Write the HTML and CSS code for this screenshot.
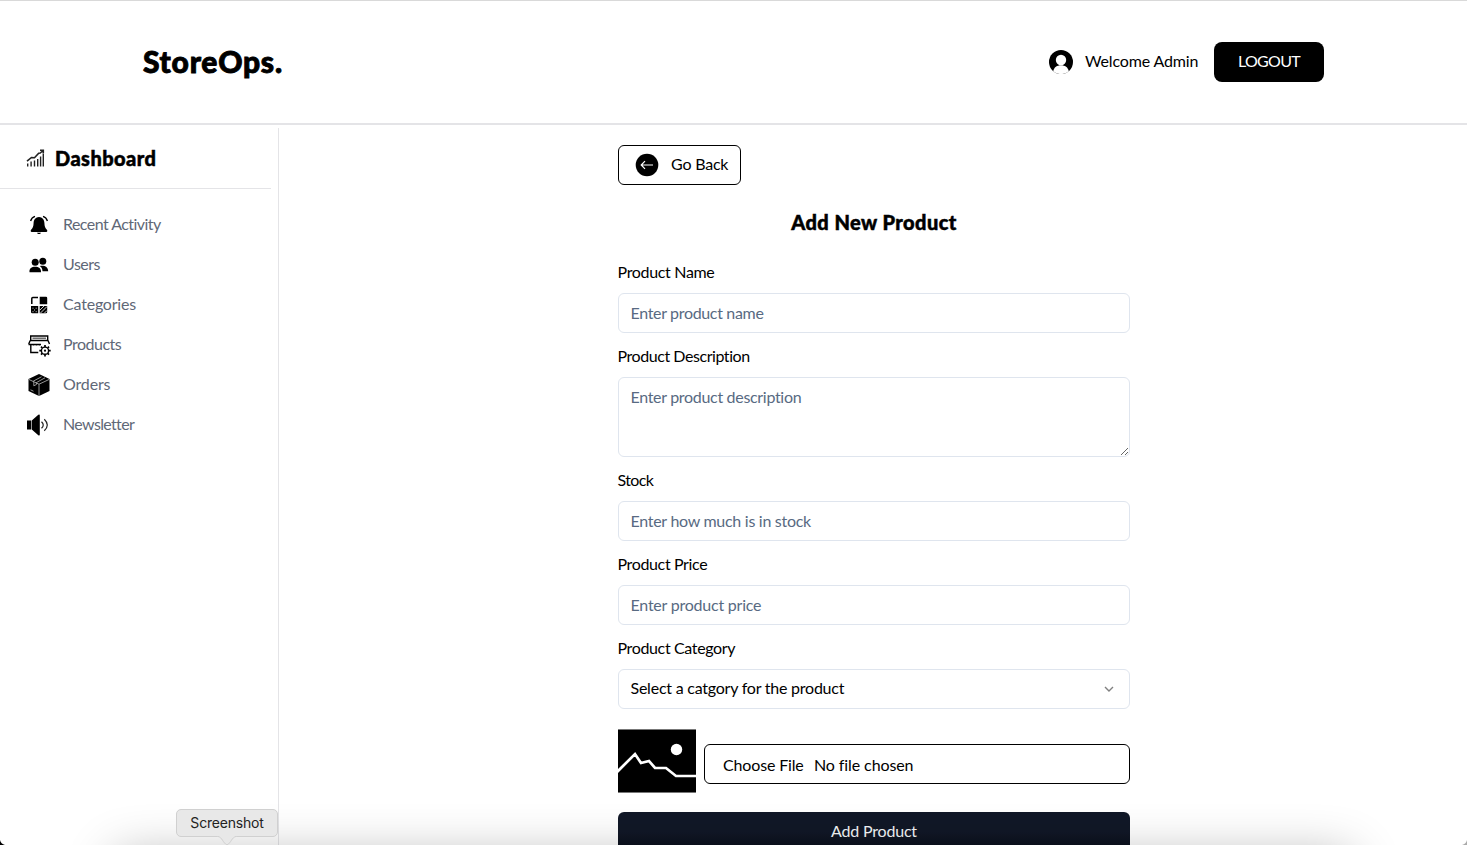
FILE: index.html
```html
<!DOCTYPE html>
<html lang="en">
<head>
<meta charset="utf-8">
<title>StoreOps</title>
<link rel="stylesheet" href="styles.css">
</head>
<body>
<div class="page">
<header class="topbar">
  <div class="brand">StoreOps.</div>
  <div class="account">
    <svg class="avatar" viewBox="0 0 24 24"><circle cx="12" cy="12" r="12"/><circle cx="12" cy="10" r="5.2" fill="#fff"/><path d="M4.200 21.200C5 17.200 8 15.200 12 15.200s7 2 7.800 6A12 12 0 0 1 4.200 21.200z" fill="#fff"/></svg>
    <span class="welcome">Welcome Admin</span>
    <button class="logout">LOGOUT</button>
  </div>
</header>
<div class="shell">
  <aside class="sidebar">
    <div class="side-head">
      <svg class="chart" viewBox="0 0 20 20" fill="none" stroke="#222"><path d="M1.700 18.500v-3M5.100 18.500v-5M8.500 18.500v-6M11.700 18.500v-7.500M14.600 18.500v-10M17.300 18.500v-13" stroke-width="1.400"/><path d="M1 13.200 5.500 9.500l3 .2 4.200-4.500 1.500-.2 3-2.500M14 2.300h3.300v3" stroke-width="1.600"/></svg>
      <span class="dash">Dashboard</span>
    </div>
    <nav class="menu">
      <a class="item"><svg viewBox="0 0 24 24"><path d="M12 4c-3.500.3-5.300 2.700-5.400 6-.1 3.500-.8 5-2.500 6.700-.8.900-.4 2.300.6 2.300h14.600c1 0 1.400-1.400.6-2.300-1.700-1.700-2.400-3.200-2.500-6.700C17.300 6.700 15.500 4.300 12 4zM10 19.700h4c-.4 1.700-3.600 1.700-4 0z"/><path d="M8 3.300C5.500 4 4.300 5.500 3.600 8M16 3.300c2.500.7 3.700 2.200 4.400 4.700" fill="none" stroke="#000" stroke-width="1.300"/></svg><span class="t-recent">Recent Activity</span></a>
      <a class="item"><svg viewBox="0 0 24 24"><circle cx="8.200" cy="9.200" r="3.500"/><circle cx="15.800" cy="8.200" r="3.500"/><path d="M2.500 19.300c-.4-4 2.200-5.500 5.700-5.500s6.100 1.500 5.800 5.500zM12.800 13.100c4.500-1 8.300.7 8.400 5.200h-5.700c-.1-2.500-1-4-2.700-5.200z"/></svg><span class="t-users">Users</span></a>
      <a class="item"><svg viewBox="0 0 24 24"><path d="M4.800 11V5.500q0-1 1-1H11" fill="none" stroke="#000" stroke-width="1.500"/><path d="M12.700 3.800H19q1.200 0 1.200 1.200v6.200h-7.500zM4 13h7.200v7.200H5.200Q4 20.200 4 19zM12.700 13h7.500v6q0 1.200-1.200 1.200h-6.300z"/><path d="m13 17 4-4M13.500 20l6.500-6.500M17.500 20l2.500-2.500" stroke="#fff" stroke-width=".8"/><path d="M5.500 15.200h1M8.700 15.200h1M7 17h1M5.500 18.700h1M8.700 18.700h1" stroke="#ddd" stroke-width=".9"/></svg><span class="t-cat">Categories</span></a>
      <a class="item"><svg viewBox="0 0 24 24" fill="none" stroke="#000" stroke-width="1.400"><path d="M3.700 3h17v4.500h-17zM3.200 7.500 1.700 11M21 7.500l1.500 3.500M1.500 11.500H14M3.800 11.500v8h7.500M6.500 11.500v1M9.500 11.500v1M12.500 11.500v1"/><path d="M5.500 5.200h13.500" stroke-width="1.300" stroke="#555"/><circle cx="18" cy="17.700" r="3.600"/><path d="M18 12v2M18 21.400v2M12.300 17.700h2M21.700 17.700h2M14 13.700l1.300 1.300M20.700 20.400l1.300 1.300M14 21.700l1.300-1.300M20.700 15l1.300-1.300" stroke-width="1.700"/><circle cx="18" cy="17.700" r="1.100" fill="#000" stroke="none"/></svg><span class="t-prod">Products</span></a>
      <a class="item"><svg viewBox="0 0 24 24"><path d="m12 1 10.500 5v12L12 23 1.500 18V6z"/><path d="m2 6.500 10 4.700 10-4.700M12 11.200V23M6.800 8.500v4.300l2.600-1.300V9.600L18 4.800M6.200 8.200 14.500 3.800M3.500 16.800l3 1.400" fill="none" stroke="#bbb" stroke-width=".8"/></svg><span class="t-ord">Orders</span></a>
      <a class="item"><svg viewBox="0 0 24 24"><path d="M0 7.500h4.200v9H0zM4.800 7.500l6.500-5.800q1.500-.8 1.500.8v19q0 1.600-1.500.8l-6.500-5.800z"/><path d="M14.500 8.700q3.500 3.300 0 6.600M17.300 6.200q6 5.800 0 11.600" fill="none" stroke="#222" stroke-width="1.200"/></svg><span class="t-news">Newsletter</span></a>
    </nav>
  </aside>
  <main class="main">
    <form class="form">
      <button class="back" type="button"><svg viewBox="0 0 24 24"><circle cx="12" cy="12" r="11.300"/><path d="M18 12H6.200M10 8.200 6.200 12l3.800 3.800" fill="none" stroke="#fff" stroke-width="1.200"/></svg><span class="t-back">Go Back</span></button>
      <h1 class="title">Add New Product</h1>
      <label class="label l-name">Product Name</label>
      <input class="field p-name" placeholder="Enter product name">
      <label class="label l-desc">Product Description</label>
      <textarea class="field area p-desc" placeholder="Enter product description"></textarea>
      <label class="label l-stock">Stock</label>
      <input class="field p-stock" placeholder="Enter how much is in stock">
      <label class="label l-price">Product Price</label>
      <input class="field p-price" placeholder="Enter product price">
      <label class="label l-cat">Product Category</label>
      <div class="field select"><span class="t-select">Select a catgory for the product</span><svg viewBox="0 0 16 16" fill="none" stroke="#808080" stroke-width="1.400"><path d="m4 6 4 4 4-4"/></svg></div>
      <div class="upload">
        <svg class="thumb" viewBox="0 0 78 64"><path d="M0 0h78v64H0z"/><path d="M0 .5h78M0 63.500h78" stroke="#777"/><circle cx="58.500" cy="20.500" r="5.700" fill="#fff"/><path d="m-1 43 18-18 6 9 8-2 6 7h11l10 8h21" fill="none" stroke="#fff" stroke-width="2.700"/></svg>
        <div class="file"><span class="choose">Choose File</span><span class="none">No file chosen</span></div>
      </div>
      <button class="submit" type="button">Add Product</button>
    </form>
  </main>
</div>
<div class="dock-shadow"></div>
<div class="tooltip">Screenshot<svg viewBox="0 0 20 10"><path d="M0 0h20c-4 1-6 7-10 9C6 7 4 1 0 0z" fill="#e8e8e8"/><path d="M1 .5C5 1 6 7 10 9c4-2 5-8 9-8.500" fill="none" stroke="#d0d0d0"/></svg></div>
<svg class="corner left" viewBox="0 0 6 6"><path d="M0 0q1 5 6 6H0z"/></svg>
<svg class="corner right" viewBox="0 0 6 6"><path d="M6 0Q5 5 0 6h6z" fill="#aaa"/></svg>
</div>
</body>
</html>
```
FILE: styles.css
```css
* { box-sizing: border-box; }
body { margin: 0; background: #fff; color: #000; font: 16px/24px Lato, sans-serif; }
button, input, textarea { font: inherit; color: inherit; }
svg { display: block; flex: none; }
.page { height: 845px; overflow: hidden; position: relative; }
.topbar { height: 125px; border-top: 1px solid #d9d9d9; border-bottom: 2px solid #e4e4e7; padding: 0 143px; display: flex; align-items: center; justify-content: space-between; }
.brand { font-size: 30px; font-weight: 900; line-height: 36px; letter-spacing: .75px; padding-bottom: 3px; -webkit-text-stroke: .9px #000; }
.account { display: flex; align-items: center; }
.avatar { width: 24px; height: 24px; margin-right: 12px; }
.welcome { width: 129px; white-space: nowrap; letter-spacing: -.15px; padding-bottom: 2px; }
.logout { width: 110px; height: 40px; border: 0; border-radius: 8px; background: #000; color: #fff; padding: 0 0 2px; letter-spacing: -.7px; }
.shell { display: flex; height: 720px; padding-top: 3px; overflow: hidden; }
.sidebar { width: 279px; flex: none; border-right: 1px solid #e4e4e7; padding-right: 7px; }
.side-head { height: 61px; border-bottom: 1px solid #e4e4e7; padding: 0 0 0 26px; display: flex; align-items: center; gap: 9px; }
.chart { width: 20px; height: 20px; }
.dash { font-size: 20px; font-weight: 900; line-height: 28px; letter-spacing: .45px; padding-bottom: 1px; -webkit-text-stroke: .5px #000; }
.menu { padding: 16px 0 0 27px; }
.item { height: 40px; display: flex; align-items: center; gap: 12px; color: #5f6877; }
.item svg { width: 24px; height: 24px; }
.item span { padding-bottom: 2px; }
.t-recent { letter-spacing: -.55px; }
.t-users { letter-spacing: -.5px; }
.t-cat { letter-spacing: -.2px; }
.t-prod { letter-spacing: -.5px; }
.t-ord { letter-spacing: -.15px; }
.t-news { letter-spacing: -.65px; }
.main { flex: 1; padding: 17px 0 0 339px; }
.form { width: 512px; display: flex; flex-direction: column; }
.back { width: 123px; height: 40px; border: 1px solid #000; border-radius: 6px; background: #fff; padding: 0 0 0 16px; display: flex; align-items: center; gap: 12px; white-space: nowrap; flex: none; }
.back svg { width: 24px; height: 24px; }
.t-back { letter-spacing: -.2px; padding-bottom: 2px; }
.title { margin: 23px 0 24px; font-size: 20px; line-height: 28px; font-weight: 900; text-align: center; letter-spacing: .45px; -webkit-text-stroke: .5px #000; }
.label { height: 24px; margin: 0 0 9px -.5px; }
.field { width: 512px; height: 40px; margin-bottom: 11px; border: 1px solid #dfe5ee; border-radius: 6px; padding: 0 12px 2px 11.5px; background: #fff; flex: none; }
.field::placeholder { color: #586a82; opacity: 1; }
.l-name { letter-spacing: -.33px; }
.l-desc { letter-spacing: -.44px; }
.l-stock { letter-spacing: -.6px; }
.l-price { letter-spacing: -.36px; }
.l-cat { letter-spacing: -.36px; }
.p-name { letter-spacing: -.33px; }
.p-desc { letter-spacing: -.31px; }
.p-stock { letter-spacing: -.28px; }
.p-price { letter-spacing: -.22px; }
.t-select { letter-spacing: -.23px; }
.area { height: 80px; padding: 7px 12px 8px 11.5px; resize: vertical; display: block; }
.select { display: flex; justify-content: space-between; align-items: center; margin-bottom: 19px; padding-bottom: 0; }
.t-select { padding-bottom: 2px; }
.select svg { width: 16px; height: 16px; }
.upload { display: flex; align-items: center; gap: 8px; height: 66px; }
.thumb { width: 78px; height: 64px; }
.file { margin-top: 6px; flex: 1; height: 40px; border: 1px solid #000; border-radius: 6px; padding: 2px 0 0 18px; display: flex; align-items: center; white-space: nowrap; }
.choose { width: 91px; letter-spacing: -.15px; }
.none { letter-spacing: -.1px; }
.submit { height: 40px; flex: none; margin-top: 18px; border: 0; border-radius: 6px; background: linear-gradient(#111827 50%, #0c111d 85%); color: #f4f6f8; padding: 0 0 2px; letter-spacing: -.2px; }
.dock-shadow { position: absolute; left: 120px; width: 1227px; top: 860px; height: 60px; box-shadow: 0 0 50px 4px rgba(0,0,0,.3); }
.tooltip { position: absolute; left: 176px; top: 809px; width: 102px; height: 28px; border: 1px solid #d0d0d0; border-radius: 5px; background: #e8e8e8; font: 14px/26px Inter, sans-serif; letter-spacing: -.2px; text-align: center; color: #222; }
.tooltip svg { position: absolute; left: 40px; top: 26px; width: 20px; height: 10px; }
.corner { position: absolute; bottom: 0; width: 5px; height: 5px; }
.left { left: 0; }
.right { right: 0; }
```
